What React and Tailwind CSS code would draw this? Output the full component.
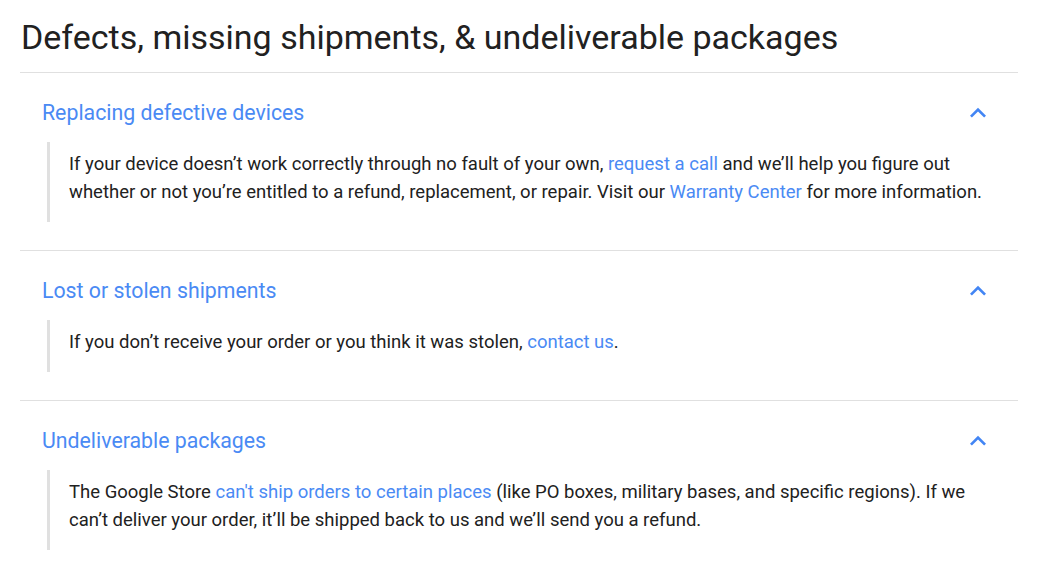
import React from 'react';

const sections = [
  {
    title: 'Replacing defective devices',
    body: (
      <>
        If your device doesn’t work correctly through no fault of your own,{' '}
        <a className="text-[#4a8af4]">request a call</a> and we’ll help you figure out
        whether or not you’re entitled to a refund, replacement, or repair. Visit our{' '}
        <a className="text-[#4a8af4]">Warranty Center</a> for more information.
      </>
    )
  },
  {
    title: 'Lost or stolen shipments',
    body: (
      <>
        If you don’t receive your order or you think it was stolen,{' '}
        <a className="text-[#4a8af4]">contact us</a>.
      </>
    )
  },
  {
    title: 'Undeliverable packages',
    body: (
      <>
        The Google Store <a className="text-[#4a8af4]">can't ship orders to certain places</a>{' '}
        (like PO boxes, military bases, and specific regions). If we can’t deliver your
        order, it’ll be shipped back to us and we’ll send you a refund.
      </>
    )
  }
];

function Chevron() {
  return (
    <svg width="32" height="32" viewBox="0 0 24 24" className="fill-[#4285f4]">
      <path d="M12 8l-6 6 1.41 1.41L12 10.83l4.59 4.58L18 14z" />
    </svg>
  );
}

export default function App() {
  return (
    <div className="bg-white min-h-[570px] px-5 pt-[17px] font-['Roboto','Liberation_Sans',sans-serif]">
      <h1 className="text-[34px] leading-[40px] text-[#212121] pl-px">
        Defects, missing shipments, &amp; undeliverable packages
      </h1>
      <div className="w-[998px] mt-[15px]">
        {sections.map((s) => (
          <div key={s.title} className="border-t border-[#e0e0e0] pt-6 pb-[28px]">
            <div className="flex items-center justify-between pl-[22px] pr-[24px]">
              <h2 className="text-[21.3px] leading-[28px] text-[#4a8af4]">{s.title}</h2>
              <Chevron />
            </div>
            <div className="ml-[27px] mt-[13px] border-l-[3px] border-[#e0e0e0] pl-[19px] pt-2 pb-4 pr-[24px] text-[18.5px] leading-[28px] text-[#212121]">
              {s.body}
            </div>
          </div>
        ))}
      </div>
    </div>
  );
}
